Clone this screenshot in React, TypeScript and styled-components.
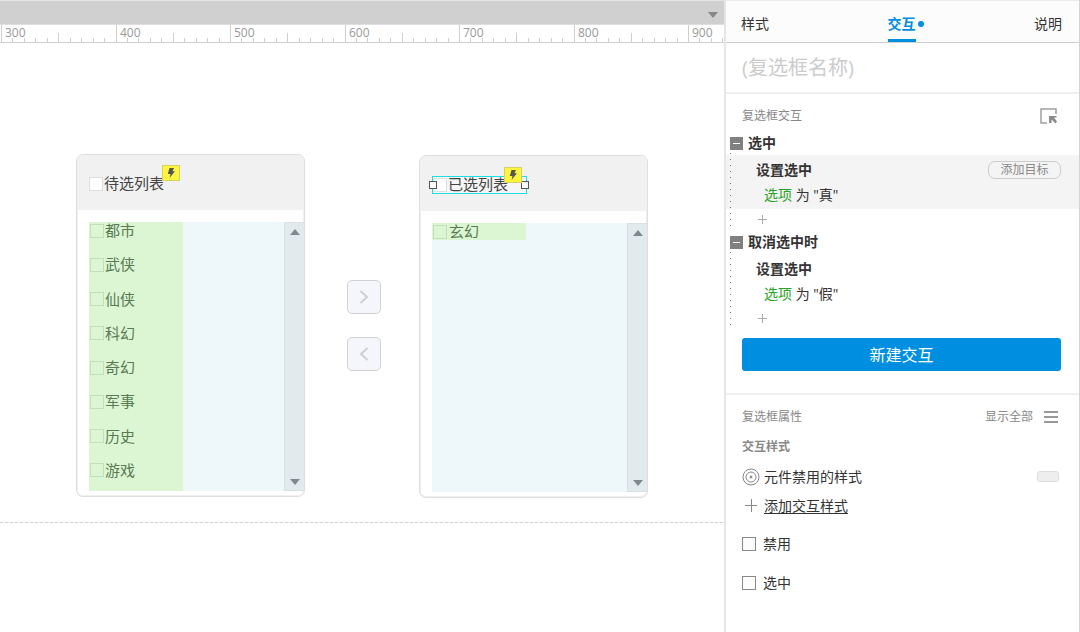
import React, { useLayoutEffect, useRef, useState } from "react";
import styled, { createGlobalStyle, css } from "styled-components";

const GlobalStyle = createGlobalStyle`
  *, *::before, *::after { box-sizing: border-box; }
  body {
    margin: 0;
    background: #fff;
    color: #333;
    font-family: "Open Sans", "Noto Sans CJK SC", sans-serif;
    font-size: 14px;
    line-height: 24px;
  }
  button, input {
    margin: 0;
    padding: 0;
    border: 0;
    background: none;
    color: inherit;
    font: inherit;
  }
  button { cursor: pointer; }
  svg { display: block; }
`;

const Page = styled.div`
  display: grid;
  grid-template-columns: minmax(0, 1fr) 356px;
  min-height: 100vh;
`;

/* ---------- design area ---------- */

const Workspace = styled.main`
  display: flex;
  flex-direction: column;
  min-width: 0;
  overflow: hidden;
`;

const PageTabs = styled.div`
  display: flex;
  align-items: center;
  justify-content: flex-end;
  height: 24px;
  padding: 4px 6px 0 0;
  border-top: 1px solid #e4e4e4;
  background: #d0d0d0;
`;

const RulerBar = styled.div`
  height: 19px;
  border-top: 1px solid #dedede;
  border-bottom: 1px solid #cfcfcf;
  overflow: hidden;

  text {
    fill: #999;
    font-size: 12px;
  }
`;

const Canvas = styled.div`
  position: relative;
  flex: 1;
`;

const Placed = styled.div<{ $x: number; $y: number }>`
  position: absolute;
  left: ${(p) => p.$x}px;
  top: ${(p) => p.$y}px;
`;

const FoldLine = styled.div`
  position: absolute;
  left: 0;
  right: 0;
  top: 479px;
  height: 1px;
  background: repeating-linear-gradient(90deg, #d2d2d2 0 3px, #f4f4f4 3px 5px);
`;

const ListCard = styled.section`
  width: 229px;
  border: 1px solid #dedede;
  border-radius: 7px;
  background: #fff;
  box-shadow: inset 0 0 0 1px #f0f0f0;
  overflow: hidden;
`;

const CardHead = styled.header`
  display: flex;
  align-items: center;
  height: 55px;
  padding: 2px 0 0 12px;
  background: #f1f1f1;
`;

const Title = styled.div<{ $selected?: boolean }>`
  position: relative;
  display: flex;
  align-items: center;
  width: 95px;
  height: 18px;
  ${(p) =>
    p.$selected &&
    css`
      border: 1px solid #1fdede;
      background: #f6f6f6;
    `}
`;

const Handle = styled.span<{ $side: "left" | "right" }>`
  position: absolute;
  top: 4px;
  ${(p) => p.$side}: ${(p) => (p.$side === "left" ? -4 : -3)}px;
  width: 8px;
  height: 8px;
  border: 1px solid #555;
  background: #fff;
`;

const Badge = styled.span`
  position: absolute;
  top: -10px;
  right: 4px;
  display: grid;
  place-items: center;
  width: 18px;
  height: 16px;
  border: 1px solid #d8d060;
  background: #fdf63c;
`;

const WidgetLabel = styled.label<{ $gap: number; $muted?: boolean }>`
  display: flex;
  align-items: center;
  gap: ${(p) => p.$gap}px;
  height: 17px;
  color: ${(p) => (p.$muted ? "#587a52" : "#444")};
  font-size: 15px;
  line-height: 17px;
  white-space: nowrap;
`;

const WidgetCheck = styled.input.attrs({ type: "checkbox" })<{ $muted?: boolean }>`
  appearance: none;
  flex: none;
  width: 14px;
  height: 14px;
  border: 1px solid ${(p) => (p.$muted ? "#c2dfbd" : "#dedede")};
  background: ${(p) => (p.$muted ? "transparent" : "#fff")};
`;

const ListBox = styled.div`
  display: flex;
  height: 269px;
  margin: 12px 0 5px 12px;
  background: #eef7fa;
`;

const Repeater = styled.div<{ $full?: boolean }>`
  display: flex;
  flex-direction: column;
  justify-content: space-between;
  align-self: flex-start;
  width: 94px;
  height: ${(p) => (p.$full ? "269px" : "17px")};
  padding: 0 0 ${(p) => (p.$full ? "12px" : "0")} 1px;
  background: #dcf6d4;
`;

const ScrollTrack = styled.div`
  display: flex;
  flex-direction: column;
  justify-content: space-between;
  width: 20px;
  margin-left: auto;
  border: 1px solid #d7e0e3;
  border-right: 0;
  background: #e2eaed;
`;

const ScrollButton = styled.button`
  display: grid;
  place-items: center;
  height: 17px;
`;

const MoveButton = styled.button`
  display: grid;
  place-items: center;
  width: 34px;
  height: 34px;
  border: 1px solid #d2d2d4;
  border-radius: 5px;
  background: #f5f6fb;
`;

const MoveColumn = styled.div`
  display: grid;
  gap: 23px;
`;

/* ---------- inspector ---------- */

const Inspector = styled.aside`
  border-left: 2px solid #e6e6e6;
  border-right: 1px solid #d4d4d4;
  background: #fff;
`;

const TabBar = styled.nav`
  display: flex;
  justify-content: space-between;
  height: 43px;
  padding: 0 17px 0 15px;
  border-top: 1px solid #ececec;
  border-bottom: 1px solid #cfcfcf;
  background: #fcfcfc;
`;

const Tab = styled.button<{ $active?: boolean }>`
  position: relative;
  height: 41px;
  padding-top: 7px;
  border-bottom: 3px solid ${(p) => (p.$active ? "#008fe0" : "transparent")};
  color: ${(p) => (p.$active ? "#008fe0" : "#333")};
  font-weight: ${(p) => (p.$active ? 700 : 400)};
`;

const ActiveDot = styled.span`
  position: absolute;
  top: 20px;
  left: 30px;
  width: 6px;
  height: 6px;
  border-radius: 50%;
  background: #008fe0;
`;

const NameInput = styled.input`
  display: block;
  width: 100%;
  height: 51px;
  padding: 0 16px;
  border-bottom: 2px solid #efefef;
  font-size: 20px;
  outline: 0;

  &::placeholder { color: #ccc; opacity: 1; }
`;

const Section = styled.section<{ $divided?: boolean }>`
  padding: 7px 0 22px;
  ${(p) => p.$divided && "border-bottom: 2px solid #efefef;"}
`;

const Row = styled.div<{ $gap?: number; $compact?: boolean }>`
  display: flex;
  align-items: center;
  gap: ${(p) => p.$gap ?? 0}px;
  height: ${(p) => (p.$compact ? 29 : 30)}px;
  padding: 0 18px 0 16px;
`;

const Caption = styled.h2<{ $strong?: boolean }>`
  flex: 1;
  margin: 0;
  color: #888;
  font-size: 12px;
  font-weight: ${(p) => (p.$strong ? 700 : 400)};
`;

const ShowAll = styled.button`
  color: #888;
  font-size: 12px;
`;

const EventGroup = styled.div`
  position: relative;

  &::after {
    content: "";
    position: absolute;
    left: 4px;
    top: 22px;
    bottom: 3px;
    width: 1px;
    background: repeating-linear-gradient(#777 0 1px, transparent 1px 6px);
  }
`;

const EventHead = styled.div`
  display: flex;
  align-items: center;
  gap: 5px;
  height: 24px;
  padding-left: 4px;
  font-weight: 700;
`;

const Collapse = styled.button`
  display: grid;
  place-items: center;
  width: 13px;
  height: 13px;
  background: #808080;
`;

const Action = styled.div<{ $active?: boolean }>`
  display: grid;
  gap: 1px;
  padding: 3px 18px 2px 30px;
  background: ${(p) => (p.$active ? "#f4f4f4" : "transparent")};
`;

const ActionHead = styled.div`
  display: flex;
  align-items: center;
  justify-content: space-between;
  height: 24px;
  font-weight: 700;
`;

const ActionTarget = styled.div`
  padding-left: 8px;
`;

const TargetName = styled.span`
  color: #27a127;
`;

const AddTarget = styled.button`
  width: 73px;
  height: 18px;
  border: 1px solid #ccc;
  border-radius: 7px;
  color: #888;
  font-size: 12px;
  font-weight: 400;
  line-height: 16px;
`;

const AddAction = styled.button`
  display: flex;
  align-items: center;
  height: 21px;
  padding-left: 32px;
`;

const PrimaryButton = styled.button`
  display: block;
  width: calc(100% - 34px);
  height: 33px;
  margin: 9px 18px 0 16px;
  border-radius: 3px;
  background: #008fe0;
  color: #fff;
  font-size: 16px;
`;

const StyleName = styled.span`
  flex: 1;
`;

const StylePill = styled.button`
  width: 22px;
  height: 11px;
  margin-right: 2px;
  border: 1px solid #ddd;
  border-radius: 3px;
  background: #eee;
`;

const AddStyle = styled.a`
  color: #333;
  text-decoration: underline;
  text-underline-offset: 2px;
`;

const Options = styled.div`
  padding-top: 4px;
`;

const Option = styled.label`
  display: flex;
  align-items: center;
  gap: 7px;
  height: 39px;
  padding-left: 16px;
`;

const OptionCheck = styled.input.attrs({ type: "checkbox" })`
  appearance: none;
  width: 14px;
  height: 14px;
  border: 1px solid #888;
  background: #fcfcfc;

  &:checked { background: #008fe0; }
`;

/* ---------- drawings ---------- */

const TICK = 11.45;

const Ruler = () => {
  const bar = useRef<HTMLDivElement>(null);
  const [width, setWidth] = useState(0);

  useLayoutEffect(() => {
    const measure = () => setWidth(bar.current?.clientWidth ?? 0);
    measure();
    window.addEventListener("resize", measure);
    return () => window.removeEventListener("resize", measure);
  }, []);

  const ticks = Array.from({ length: Math.ceil(width / TICK) }, (_, i) => ({
    i,
    x: Math.round(1 + i * TICK),
  }));

  return (
    <RulerBar ref={bar}>
      <svg width="100%" height="17" shapeRendering="crispEdges" aria-label="ruler">
        {ticks.map(({ i, x }) => {
          const h = i % 10 === 0 ? 17 : i % 5 === 0 ? 9 : 4;
          return <rect key={i} x={x} y={17 - h} width="1" height={h} fill="#cfcfcf" />;
        })}
        {ticks
          .filter(({ i, x }) => i % 10 === 0 && x + 25 < width)
          .map(({ i, x }) => (
            <text key={i} x={x + 4} y="12">
              {300 + i * 10}
            </text>
          ))}
      </svg>
    </RulerBar>
  );
};

const Arrow = ({ down, fill = "#808a8e" }: { down?: boolean; fill?: string }) => (
  <svg width="10" height="6" viewBox="0 0 10 6">
    <path d={down ? "M0 0h10L5 6z" : "M0 6h10L5 0z"} fill={fill} />
  </svg>
);

const Bolt = () => (
  <svg width="10" height="12" viewBox="0 0 10 12">
    <path d="M3.5 1H8L6.500 4.200H9L3.500 11L4.500 7H1.800z" fill="#555" />
  </svg>
);

const Chevron = ({ left }: { left?: boolean }) => (
  <svg width="10" height="14" viewBox="0 0 10 14" fill="none" stroke="#cfcfd2" strokeWidth="2">
    <path d={left ? "M8.5 1L2 7l6.500 6" : "M1.500 1L8 7l-6.500 6"} />
  </svg>
);

const Plus = ({ size, color }: { size: number; color: string }) => (
  <svg width={size} height={size} viewBox={`0 0 ${size} ${size}`} shapeRendering="crispEdges">
    <rect x={(size - 1) / 2} y="0" width="1" height={size} fill={color} />
    <rect x="0" y={(size - 1) / 2} width={size} height="1" fill={color} />
  </svg>
);

/* ---------- parts ---------- */

const pending = ["都市", "武侠", "仙侠", "科幻", "奇幻", "军事", "历史", "游戏"];
const chosen = ["玄幻"];

type ListWidgetProps = { title: string; items: string[]; selected?: boolean };

const ListWidget = ({ title, items, selected }: ListWidgetProps) => (
  <ListCard>
    <CardHead>
      <Title $selected={selected}>
        <WidgetLabel $gap={1}>
          <WidgetCheck />
          {title}
        </WidgetLabel>
        {selected && <Handle $side="left" />}
        {selected && <Handle $side="right" />}
        <Badge>
          <Bolt />
        </Badge>
      </Title>
    </CardHead>
    <ListBox>
      <Repeater $full={items.length > 1}>
        {items.map((item) => (
          <WidgetLabel key={item} $gap={selected ? 2 : 1} $muted>
            <WidgetCheck $muted />
            {item}
          </WidgetLabel>
        ))}
      </Repeater>
      <ScrollTrack>
        <ScrollButton aria-label="up">
          <Arrow />
        </ScrollButton>
        <ScrollButton aria-label="down">
          <Arrow down />
        </ScrollButton>
      </ScrollTrack>
    </ListBox>
  </ListCard>
);

type EventProps = { name: string; value: string; active?: boolean };

const EventItem = ({ name, value, active }: EventProps) => (
  <EventGroup>
    <EventHead>
      <Collapse aria-label="collapse">
        <svg width="7" height="1">
          <rect width="7" height="1" fill="#fff" />
        </svg>
      </Collapse>
      {name}
    </EventHead>
    <Action $active={active}>
      <ActionHead>
        设置选中
        {active && <AddTarget>添加目标</AddTarget>}
      </ActionHead>
      <ActionTarget>
        <TargetName>选项</TargetName> 为 "{value}"
      </ActionTarget>
    </Action>
    <AddAction aria-label="add">
      <Plus size={9} color="#aaa" />
    </AddAction>
  </EventGroup>
);

export default function App() {
  const [name, setName] = useState("");
  return (
    <>
      <GlobalStyle />
      <Page>
        <Workspace>
          <PageTabs>
            <button aria-label="pages">
              <Arrow down fill="#888" />
            </button>
          </PageTabs>
          <Ruler />
          <Canvas>
            <Placed $x={76} $y={111}>
              <ListWidget title="待选列表" items={pending} />
            </Placed>
            <Placed $x={347} $y={237}>
              <MoveColumn>
                <MoveButton aria-label="right">
                  <Chevron />
                </MoveButton>
                <MoveButton aria-label="left">
                  <Chevron left />
                </MoveButton>
              </MoveColumn>
            </Placed>
            <Placed $x={419} $y={112}>
              <ListWidget title="已选列表" items={chosen} selected />
            </Placed>
            <FoldLine />
          </Canvas>
        </Workspace>

        <Inspector>
          <TabBar>
            <Tab>样式</Tab>
            <Tab $active>
              交互
              <ActiveDot />
            </Tab>
            <Tab>说明</Tab>
          </TabBar>
          <NameInput
            aria-label="复选框名称"
            placeholder="(复选框名称)"
            value={name}
            onChange={(e) => setName(e.target.value)}
          />

          <Section $divided>
            <Row>
              <Caption>复选框交互</Caption>
              <button aria-label="pick">
                <svg width="22" height="16" viewBox="0 0 22 16">
                  <path
                    d="M17 6V1H2v14h6"
                    fill="none"
                    stroke="#a0a0a0"
                    strokeWidth="1.500"
                  />
                  <path d="M10 8h7.500v1.500h-2.500L18 13.500 16.500 15.500 12.500 11.500V15H10z" fill="#8c8c8c" />
                </svg>
              </button>
            </Row>
            <EventItem name="选中" value="真" active />
            <EventItem name="取消选中时" value="假" />
            <PrimaryButton>新建交互</PrimaryButton>
          </Section>

          <Section>
            <Row $gap={11}>
              <Caption>复选框属性</Caption>
              <ShowAll>显示全部</ShowAll>
              <svg width="17" height="12" viewBox="0 0 17 12">
                <path d="M0 1h14M0 6h14M0 11h14" stroke="#999" strokeWidth="2" />
              </svg>
            </Row>
            <Row>
              <Caption as="h3" $strong>
                交互样式
              </Caption>
            </Row>
            <Row $gap={4} $compact>
              <svg width="18" height="18" viewBox="0 0 18 18" fill="none" stroke="#888">
                <circle cx="9" cy="9" r="8" />
                <circle cx="9" cy="9" r="5" />
                <circle cx="9" cy="9" r="1" fill="#888" />
              </svg>
              <StyleName>元件禁用的样式</StyleName>
              <StylePill aria-label="style" />
            </Row>
            <Row $gap={7} $compact>
              <svg width="15" height="13" viewBox="0 0 15 13" shapeRendering="crispEdges">
                <path d="M9 0v13M3 6.500h12" stroke="#888" />
              </svg>
              <AddStyle href="#add">添加交互样式</AddStyle>
            </Row>
            <Options>
              <Option>
                <OptionCheck />
                禁用
              </Option>
              <Option>
                <OptionCheck />
                选中
              </Option>
            </Options>
          </Section>
        </Inspector>
      </Page>
    </>
  );
}
